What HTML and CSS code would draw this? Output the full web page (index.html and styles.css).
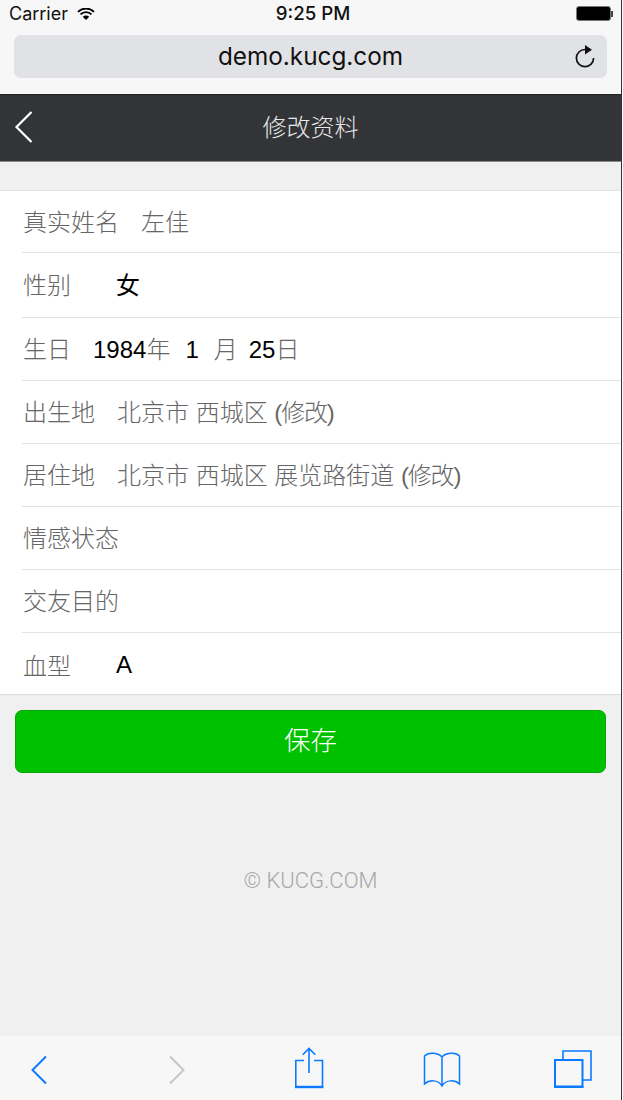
FILE: index.html
```html
<!DOCTYPE html>
<html>
<head>
  <meta charset="utf-8">
  <title>修改资料</title>
  <link rel="stylesheet" href="styles.css">
</head>
<body>
  <div id="container">
    <div class="chrome">
      <div class="status-bar">
        <div class="status-left">
          <span>Carrier</span>
          <svg class="wifi" width="18" height="12" viewBox="0 0 18 12"><path d="M9 12 5.800 8.800a4.500 4.500 0 0 1 6.400 0z" fill="#000"/><path d="M3.500 6.400a7.800 7.800 0 0 1 11 0M1 3.800a11.400 11.400 0 0 1 16 0" fill="none" stroke="#000" stroke-width="1.800"/></svg>
        </div>
        <div class="status-time">9:25 PM</div>
        <div class="status-right">
          <div class="battery"></div>
          <div class="battery-tip"></div>
        </div>
      </div>
      <div class="url-bar">
        <span class="url">demo.kucg.com</span>
        <svg class="reload" width="20" height="23" viewBox="0 0 20 23"><path d="M10 4.500A8.600 8.600 0 1 0 18.600 13.100" fill="none" stroke="#111" stroke-width="1.700"/><path d="M10 0v9.500l7-4.800z" fill="#111"/></svg>
      </div>
    </div>

    <div class="nav">
      <svg class="nav-back" width="20" height="34" viewBox="0 0 20 34"><path d="M17.500 2 2.500 17l15 15" fill="none" stroke="#fff" stroke-width="2.200"/></svg>
      <div class="nav-title">修改资料</div>
    </div>

    <div class="form-list">
      <div class="row row-first"><span class="label label-wide">真实姓名</span><span class="value-muted">左佳</span></div>
      <div class="row row-tall"><span class="label label-select">性别</span><span class="value">女</span></div>
      <div class="row row-date"><span class="label label-date">生日</span><span class="value">1984<span class="unit">年</span></span><span class="value date-month">1</span><span class="value date-month-unit"><span class="unit">月</span></span><span class="value">25<span class="unit">日</span></span></div>
      <div class="row"><span class="label label-place">出生地</span><span class="value-muted">北京市 西城区 <span class="edit-link">(修改)</span></span></div>
      <div class="row"><span class="label label-place">居住地</span><span class="value-muted">北京市 西城区 展览路街道 <span class="edit-link">(修改)</span></span></div>
      <div class="row"><span class="label">情感状态</span></div>
      <div class="row"><span class="label">交友目的</span></div>
      <div class="row row-last"><span class="label label-select">血型</span><span class="value">A</span></div>
    </div>

    <div class="actions">
      <button class="save-button">保存</button>
    </div>

    <div class="copyright">© KUCG.COM</div>

    <div class="toolbar">
      <svg class="tool-back" width="20" height="30" viewBox="0 0 20 30"><path d="M17 1.500 3.500 15 17 28.500" fill="none" stroke="#0a7aff" stroke-width="2"/></svg>
      <svg class="tool-forward" width="20" height="30" viewBox="0 0 20 30"><path d="M3 1.500 16.500 15 3 28.500" fill="none" stroke="#c6c6c8" stroke-width="2"/></svg>
      <svg class="tool-share" width="32" height="42" viewBox="0 0 32 42"><path d="M10 13.500H1.800v26.500h26.700V13.500H20M15 26V1.500M8.700 7.800 15 1.500l6.300 6.300" fill="none" stroke="#0a7aff" stroke-width="1.600"/><path d="M1 40h28.300" fill="none" stroke="#0a7aff" stroke-width="2.400"/></svg>
      <svg class="tool-book" width="38" height="38" viewBox="0 0 38 38"><path d="M19 6C16 2.500 6 0 1.500 5v28c4.500-4 13.500-5 17.500 2 4-7 13-6 17.500-2V5C32 0 22 2.500 19 6zm0 0v29" fill="none" stroke="#0a7aff" stroke-width="1.500"/></svg>
      <svg class="tool-tabs" width="38" height="38" viewBox="0 0 38 38"><path d="M9 9V1h28v29h-8" fill="none" stroke="#0a7aff" stroke-width="1.600"/><path d="M1 10h27.500v26.500H1z" fill="none" stroke="#0a7aff" stroke-width="2"/><path d="M0 37h29.500" fill="none" stroke="#0a7aff" stroke-width="2"/></svg>
    </div>
  </div>
</body>
</html>
```

FILE: styles.css
```css
* { box-sizing: border-box; }
body { margin: 0; padding: 0; background-color: #fff; font-family: "Liberation Sans", "Noto Sans CJK SC", sans-serif; }
#container { width: 622px; height: 1100px; display: flex; flex-direction: column; overflow: hidden; background-color: #f0f0f0; border-right: 1px solid #333; }

.chrome { height: 94px; background-color: #f7f7f7; }
.status-bar { height: 27px; padding: 0 8px 0 9px; display: flex; align-items: center; justify-content: space-between; font-family: Inter, sans-serif; font-size: 18px; color: #111; }
.status-left { width: 200px; display: flex; align-items: center; gap: 9px; }
.status-time { font-weight: 500; font-size: 18.700px; margin-left: 4px; }
.status-right { width: 200px; display: flex; justify-content: flex-end; align-items: center; }
.battery { width: 35px; height: 15px; background-color: #000; border-radius: 3px; border: 1px solid #777; }
.battery-tip { width: 2px; height: 6px; background-color: #444; }
.url-bar { height: 43px; margin: 8px 14px 0 14px; padding-bottom: 2px; background-color: #e1e2e5; border-radius: 7px; display: flex; align-items: center; justify-content: center; position: relative; }
.url { font-family: Inter, sans-serif; font-size: 24.300px; color: #111; }
.reload { position: absolute; right: 12px; top: 10px; }

.nav { height: 68px; padding-bottom: 5px; background-color: #333437; border-top: 1px solid #222; border-bottom: 1px solid #8a8a8a; display: flex; align-items: center; justify-content: center; position: relative; }
.nav-back { position: absolute; left: 14px; top: 15px; }
.nav-title { font-size: 24px; font-weight: 300; color: #e8e8e8; }

.form-list { margin-top: 28px; background-color: #fff; border-top: 1px solid #e2e2e2; border-bottom: 1px solid #dcdcdc; padding-left: 22px; }
.row { height: 63px; padding: 0 0 3px 1px; border-bottom: 1px solid #e2e2e2; display: flex; align-items: center; font-size: 24px; color: #666; }
.row-first { height: 62px; }
.row-tall { height: 65px; }
.row-date { align-items: baseline; padding-top: 12px; }
.row-last { height: 61px; padding: 2px 0 0 1px; border-bottom: none; }
.label { font-weight: 300; }
.label-wide { width: 118px; }
.label-select { width: 93px; }
.label-date { width: 70px; }
.label-place { width: 94px; }
.value-muted { font-weight: 300; }
.edit-link { letter-spacing: -1.200px; }
.value { color: #000; }
.unit { font-weight: 300; color: #666; }
.date-month { margin-left: 15px; }
.date-month-unit { margin-left: 15px; margin-right: 11px; }

.actions { padding: 15px 15px 0 15px; }
.save-button { display: block; width: 100%; height: 63px; padding: 0 0 6px; border: 1px solid #06a806; border-radius: 7px; background-color: #00c100; color: #fff; font-family: inherit; font-size: 26.500px; font-weight: 300; }

.copyright { flex: 1; padding-top: 95px; text-align: center; font-family: Roboto, sans-serif; font-weight: 300; font-size: 22px; color: #a8a8a8; }

.toolbar { height: 64px; background-color: #f7f7f7; display: flex; align-items: center; padding-left: 29px; }
.tool-back { margin-top: 4px; }
.tool-forward { margin-left: 118px; margin-top: 4px; }
.tool-share { margin-left: 107px; margin-top: -1px; }
.tool-book { margin-left: 97px; margin-top: 4px; }
.tool-tabs { margin-left: 93px; margin-top: 2px; }
```
